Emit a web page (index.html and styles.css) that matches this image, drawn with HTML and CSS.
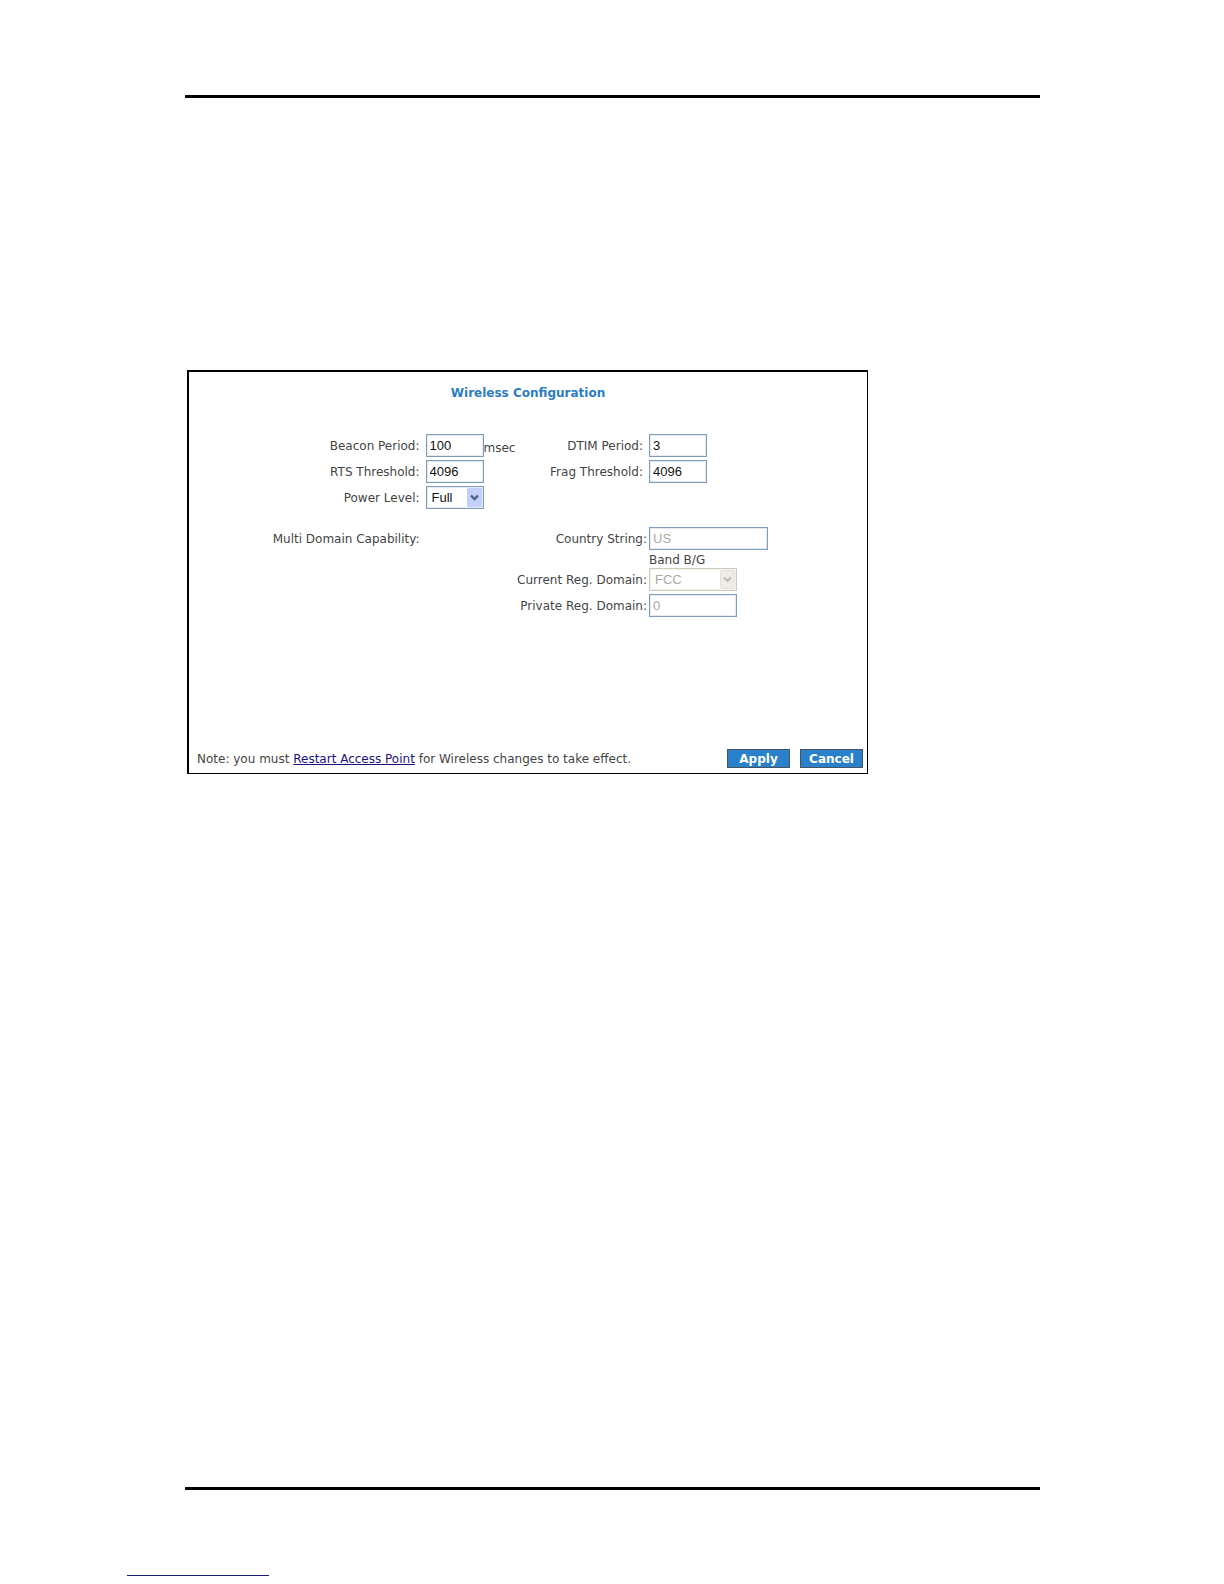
FILE: index.html
```html
<!DOCTYPE html>
<html lang="en">
<head>
<meta charset="utf-8">
<title>Wireless Configuration</title>
<link rel="stylesheet" href="styles.css">
</head>
<body>
<hr class="rule">
<main class="content">
  <form class="panel">
    <h1 class="title">Wireless Configuration</h1>
    <div class="fields">
      <label class="label" for="beacon">Beacon Period:</label>
      <div class="field"><input class="box short" id="beacon" type="text" value="100"><span class="unit">msec</span></div>
      <label class="label" for="dtim">DTIM Period:</label>
      <div class="field"><input class="box short" id="dtim" type="text" value="3"></div>

      <label class="label" for="rts">RTS Threshold:</label>
      <div class="field"><input class="box short" id="rts" type="text" value="4096"></div>
      <label class="label" for="frag">Frag Threshold:</label>
      <div class="field"><input class="box short" id="frag" type="text" value="4096"></div>

      <label class="label" for="power">Power Level:</label>
      <div class="field wide">
        <div class="picker">
          <select class="box short" id="power"><option>Full</option></select>
          <svg class="arrow" viewBox="0 0 15 19" aria-hidden="true"><rect width="15" height="19" rx="1" fill="#c3d0fb"/><path d="M4 7.5l3.5 3.5L11 7.5" fill="none" stroke="#4d6185" stroke-width="2.4"/></svg>
        </div>
      </div>

      <span class="label section">Multi Domain Capability:</span>
      <label class="label near section" for="country">Country String:</label>
      <div class="field section"><input class="box long" id="country" type="text" value="US" disabled></div>

      <span class="band">Band B/G</span>

      <label class="label near" for="current">Current Reg. Domain:</label>
      <div class="field">
        <div class="picker">
          <select class="box medium" id="current" disabled><option>FCC</option></select>
          <svg class="arrow" viewBox="0 0 15 19" aria-hidden="true"><rect x=".5" y=".5" width="14" height="18" rx="1" fill="#eeede5" stroke="#e3e1d8"/><path d="M4 7.5l3.5 3.5L11 7.5" fill="none" stroke="#bdbbae" stroke-width="2.2"/></svg>
        </div>
      </div>

      <label class="label near" for="private">Private Reg. Domain:</label>
      <div class="field"><input class="box medium" id="private" type="text" value="0" disabled></div>
    </div>
    <div class="actions">
      <p class="note">Note: you must <a class="link" href="#restart">Restart Access Point</a> for Wireless changes to take effect.</p>
      <button class="button" type="button">Apply</button>
      <button class="button" type="button">Cancel</button>
    </div>
  </form>
</main>
<hr class="rule">
<footer class="footer"><hr class="footer-line"></footer>
</body>
</html>
```
FILE: styles.css
```css
* {
  box-sizing: border-box;
}

body {
  display: flex;
  flex-direction: column;
  min-height: 100vh;
  margin: 0;
  padding: 95px 0 8px;
  background: #fff;
  color: #444;
  font: 12px/14px "DejaVu Sans", sans-serif;
}

.rule {
  align-self: stretch;
  height: 3px;
  margin: 0 184px 0 185px;
  border: 0;
  background: #000;
}

.content {
  flex: 1;
  padding: 272px 184px 0 187px;
}

.panel {
  display: flex;
  flex-direction: column;
  max-width: 681px;
  min-height: 404px;
  border: solid #000;
  border-width: 2px 1px 1px 2px;
}

.title {
  margin: 14px 0 34px;
  color: #2a7cc5;
  font-size: 12px;
  line-height: 14px;
  text-align: center;
}

.fields {
  display: grid;
  grid-template-columns: 34% 100px minmax(0, 1fr) 218px;
  gap: 3px 6px;
}

.label {
  align-self: center;
  text-align: right;
  white-space: nowrap;
}

.near {
  grid-column: 2 / 4;
  margin-right: -4px;
}

.section {
  margin-top: 15px;
}

.field {
  display: flex;
}

.wide {
  grid-column: span 3;
}

.unit {
  margin-top: 7px;
}

.band {
  grid-column: 4;
  margin-bottom: -2px;
}

.box {
  height: 23px;
  margin: 0;
  padding: 0 3px;
  border: 1px solid #7f9db9;
  border-radius: 0;
  outline: 1px solid #e3eaf1;
  outline-offset: -2px;
  background: #fff;
  color: #111;
  font: 13px "Liberation Sans", sans-serif;
}

.box:disabled {
  color: #aaa8a0;
  opacity: 1;
}

.short {
  width: 58px;
}

.medium {
  width: 88px;
}

.long {
  width: 119px;
}

select.box {
  padding: 0 5px;
  appearance: none;
}

select.box:disabled {
  border-color: #cdcbc0;
  outline-color: #f3f2ed;
}

.picker {
  position: relative;
}

.arrow {
  position: absolute;
  top: 2px;
  right: 2px;
  width: 15px;
  height: 19px;
  pointer-events: none;
}

.actions {
  display: flex;
  align-items: center;
  gap: 10px;
  margin-top: auto;
  padding: 0 4px 5px 8px;
}

.note {
  flex: 1;
  margin: 0;
}

.link {
  color: #1a1080;
}

.button {
  width: 63px;
  height: 19px;
  padding: 0;
  border: 1px solid #45545f;
  background: #2980cb;
  color: #fff;
  font: bold 12px/14px "DejaVu Sans", sans-serif;
}

.footer {
  padding: 85px 127px 0;
}

.footer-line {
  width: 142px;
  height: 1px;
  margin: 0;
  border: 0;
  background: #1a1a80;
}
```
